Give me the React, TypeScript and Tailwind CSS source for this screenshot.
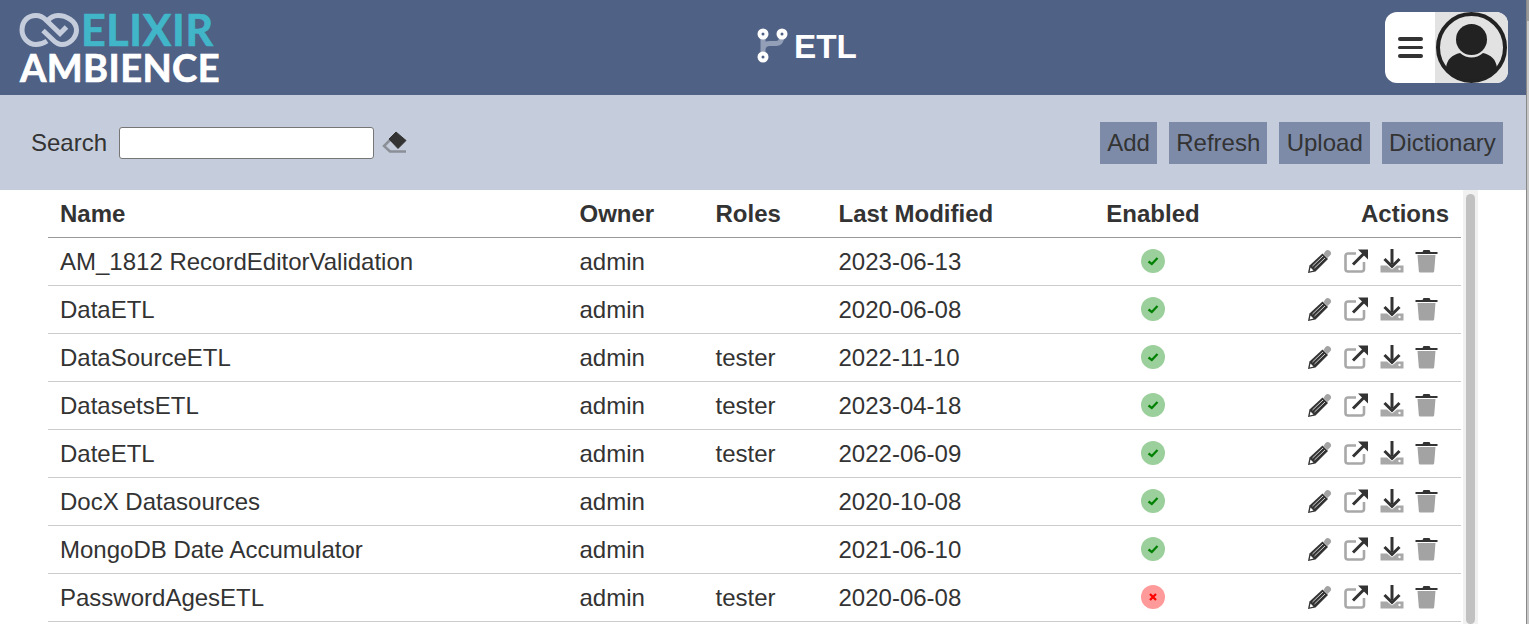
const rows = [
  { name: "AM_1812 RecordEditorValidation", owner: "admin", roles: "", date: "2023-06-13", enabled: true },
  { name: "DataETL", owner: "admin", roles: "", date: "2020-06-08", enabled: true },
  { name: "DataSourceETL", owner: "admin", roles: "tester", date: "2022-11-10", enabled: true },
  { name: "DatasetsETL", owner: "admin", roles: "tester", date: "2023-04-18", enabled: true },
  { name: "DateETL", owner: "admin", roles: "tester", date: "2022-06-09", enabled: true },
  { name: "DocX Datasources", owner: "admin", roles: "", date: "2020-10-08", enabled: true },
  { name: "MongoDB Date Accumulator", owner: "admin", roles: "", date: "2021-06-10", enabled: true },
  { name: "PasswordAgesETL", owner: "admin", roles: "tester", date: "2020-06-08", enabled: false },
];

function Logo() {
  return (
    <div className="ml-[19px] mt-[11px] flex w-[202px] flex-col font-['Lato',sans-serif] font-bold">
      <div className="flex h-[37px] items-center">
        <svg width="62" height="37" viewBox="0 0 62 37" fill="none" className="shrink-0">
          <path
            d="M28 30 C25 32 22 33.500 17 33.500 C9 33.500 3 26.500 3 19 C3 10 9 4.500 17 4.500 C21 4.500 24 6 27 9 L41 22.500 L47.500 16"
            stroke="#c5cddc"
            strokeWidth="5"
          />
          <path
            d="M28 10.500 C31 6.500 35 4.500 39 4.500 C47 4.500 57.500 10 57.500 19 C57.500 27 50 33.500 43 33.500 C39 33.500 37 32 34 29 L24 19.500"
            stroke="#c5cddc"
            strokeWidth="5"
          />
        </svg>
        <span className="text-[43px] leading-[37px] tracking-[0.6px] text-[#41b6c9] [-webkit-text-stroke:0.7px_#41b6c9]">ELIXIR</span>
      </div>
      <span className="pl-[1px] text-[38px] leading-[38px] tracking-[0.4px] text-white [-webkit-text-stroke:0.7px_#ffffff]">AMBIENCE</span>
    </div>
  );
}

function EtlIcon() {
  return (
    <svg width="32" height="38" viewBox="0 0 32 38" fill="none">
      <path d="M7 8 V30 M7 24 C7 19 10 17.500 14 17.500 H20 C24 17.500 26 15 26 8" stroke="#939fb7" strokeWidth="5" />
      <circle cx="7" cy="8" r="3.500" fill="#4f6185" stroke="white" strokeWidth="4" />
      <circle cx="26" cy="8" r="3.500" fill="#4f6185" stroke="white" strokeWidth="4" />
      <circle cx="7" cy="31" r="3.500" fill="#4f6185" stroke="white" strokeWidth="4" />
    </svg>
  );
}

function Avatar() {
  return (
    <svg width="73" height="71" viewBox="0 0 73 71" className="block">
      <rect width="73" height="71" fill="#e2e2e2" />
      <circle cx="36.500" cy="35.500" r="33.500" fill="none" stroke="#222" strokeWidth="4" />
      <circle cx="36.500" cy="27.500" r="15.500" fill="#222" />
      <path d="M11 56 C12 47 17 43 25 41 C32 47 41 47 48 41 C56 43 61 47 62 56 C50 72 23 72 11 56 Z" fill="#222" />
    </svg>
  );
}

function EraserIcon() {
  return (
    <svg width="25" height="24" viewBox="0 0 25 24" className="shrink-0" fill="none">
      <path d="M8 9 L2 15 L8 20.500 H24" stroke="#8b8f96" strokeWidth="2.500" />
      <path d="M14 1 L24 9.500 L16 17.500 L7 8 Z" fill="#333" stroke="#333" strokeWidth="1" strokeLinejoin="round" />
    </svg>
  );
}

function EditIcon() {
  return (
    <svg width="25" height="24" viewBox="0 0 25 24">
      <path d="M16.500 5 L20.500 9 L23 6.500 C24.500 5 24.500 3.500 23 2 C21.500 0.500 20 0.500 18.500 2 Z" fill="#a3a3a3" />
      <path d="M15.500 4.500 L21 10 L8.500 22.500 L1 24 L2.500 16.500 Z" fill="#333" />
      <path d="M5.500 17 L16 7 M7.500 19 L18 9" stroke="#fff" strokeWidth="0.800" />
      <path d="M3.500 18.500 L6.500 21.500 L2.700 22.500 Z" fill="#fff" />
    </svg>
  );
}

function OpenIcon() {
  return (
    <svg width="25" height="24" viewBox="0 0 25 24" fill="none">
      <path d="M12 4.500 H4 C2.500 4.500 1.500 5.500 1.500 7 V20 C1.500 21.500 2.500 22.500 4 22.500 H17.500 C19 22.500 20 21.500 20 20 V13" stroke="#a8a8a8" strokeWidth="2.600" />
      <path d="M9 15.500 L20 4.500" stroke="#333" strokeWidth="3" />
      <path d="M14 0.500 H24 V10.500 Z" fill="#333" />
    </svg>
  );
}

function DownloadIcon() {
  return (
    <svg width="24" height="24" viewBox="0 0 24 24">
      <path d="M0.500 16.500 H7 L12 20.500 L17 16.500 H23.500 V23.500 H0.500 Z" fill="#a8a8a8" />
      <circle cx="19.500" cy="20" r="1.200" fill="#fff" />
      <path d="M12 0 V15" stroke="#333" strokeWidth="3" fill="none" />
      <path d="M4.500 10 L12 17.500 L19.500 10" fill="none" stroke="#333" strokeWidth="3" />
    </svg>
  );
}

function TrashIcon() {
  return (
    <svg width="23" height="24" viewBox="0 0 23 24">
      <path d="M2.500 6 H20.500 L19.200 22 C19.100 23 18.500 23.500 17.500 23.500 H5.500 C4.500 23.500 3.900 23 3.800 22 Z" fill="#a3a3a3" />
      <path d="M0.500 3 H7.500 L8.500 1 H14.500 L15.500 3 H22.500 V5 H0.500 Z" fill="#333" />
    </svg>
  );
}

function StatusIcon({ ok }: { ok: boolean }) {
  return (
    <span className={`inline-flex h-6 w-6 items-center justify-center rounded-full ${ok ? "bg-[#9bcf9b]" : "bg-[#ff9a9a]"}`}>
      <svg width="14" height="14" viewBox="0 0 14 14" fill="none">
        {ok ? (
          <path d="M2.500 7.500 L5.800 10 L11.500 4" stroke="#008000" strokeWidth="2.200" />
        ) : (
          <path d="M4 4 L10 10 M10 4 L4 10" stroke="#ff0000" strokeWidth="2.200" />
        )}
      </svg>
    </span>
  );
}

export default function App() {
  return (
    <div className="flex h-[624px] overflow-hidden bg-white font-['Liberation_Sans',Arial,sans-serif] text-[#333]">
      <div className="min-w-0 flex-1">
        <header className="relative flex h-[95px] items-start justify-between bg-[#4f6185]">
          <Logo />
          <div className="absolute left-[756px] top-[26px] flex items-center gap-[6px]">
            <EtlIcon />
            <span className="mt-[4px] text-[33.300px] font-bold leading-none text-white">ETL</span>
          </div>
          <div className="mr-[18px] mt-[12px] flex h-[71px] w-[123px] overflow-hidden rounded-[12px] bg-white">
            <div className="flex w-[50px] flex-col items-center justify-center gap-[5px] pl-[1px]">
              <span className="h-[3.500px] w-[25px] rounded-full bg-[#333]" />
              <span className="h-[3.500px] w-[25px] rounded-full bg-[#333]" />
              <span className="h-[3.500px] w-[25px] rounded-full bg-[#333]" />
            </div>
            <Avatar />
          </div>
        </header>

        <div className="flex h-[95px] items-start justify-between bg-[#c5cddc] pl-[31px] pr-[23px]">
          <div className="mt-[30px] flex items-center text-[24px]">
            <span>Search</span>
            <input className="ml-[12px] h-[32px] w-[255px] rounded-[3px] border border-[#767676] bg-white" aria-label="Search" />
            <span className="ml-[8px]"><EraserIcon /></span>
          </div>
          <div className="mt-[27px] flex gap-[12px] text-[24px]">
            {["Add", "Refresh", "Upload", "Dictionary"].map((b) => (
              <button key={b} className="h-[42px] bg-[#7d8ba8] px-[7.200px]">{b}</button>
            ))}
          </div>
        </div>

        <div className="flex items-start">
          <table className="ml-[48px] w-[1413px] table-fixed border-separate border-spacing-0 text-[24px]">
            <colgroup>
              <col className="w-[519.500px]" />
              <col className="w-[136px]" />
              <col className="w-[123px]" />
              <col className="w-[252.500px]" />
              <col className="w-[148px]" />
              <col />
            </colgroup>
            <thead>
              <tr className="h-[48px] text-left">
                <th className="border-b border-[#999] pl-[12px] font-bold">Name</th>
                <th className="border-b border-[#999] pl-[12px] font-bold">Owner</th>
                <th className="border-b border-[#999] pl-[12px] font-bold">Roles</th>
                <th className="border-b border-[#999] pl-[12px] font-bold">Last Modified</th>
                <th className="border-b border-[#999] text-center font-bold">Enabled</th>
                <th className="border-b border-[#999] pr-[12px] text-right font-bold">Actions</th>
              </tr>
            </thead>
            <tbody>
              {rows.map((r) => (
                <tr key={r.name} className="h-[48px]">
                  <td className="border-b border-[#ccc] pl-[12px]">{r.name}</td>
                  <td className="border-b border-[#ccc] pl-[12px]">{r.owner}</td>
                  <td className="border-b border-[#ccc] pl-[12px]">{r.roles}</td>
                  <td className="border-b border-[#ccc] pl-[12px]">{r.date}</td>
                  <td className="border-b border-[#ccc]"><div className="flex justify-center pb-[2px]"><StatusIcon ok={r.enabled} /></div></td>
                  <td className="border-b border-[#ccc]">
                    <div className="flex items-center justify-end gap-[11px] pb-[2px] pr-[23px]">
                      <span className="mr-[1px]"><EditIcon /></span>
                      <OpenIcon />
                      <DownloadIcon />
                      <TrashIcon />
                    </div>
                  </td>
                </tr>
              ))}
            </tbody>
          </table>
          <div className="ml-[2px] h-[434px] w-[15px] bg-[#f1f1f1] px-[3px] pt-[4px]">
            <div className="h-full rounded-full bg-[#c1c1c1]" />
          </div>
        </div>
      </div>
      <div className="h-full w-[3px] shrink-0 border-l border-[#888] bg-[#c8c8c8]">
        <div className="h-[21px] bg-[#9a9a9a]" />
      </div>
    </div>
  );
}
